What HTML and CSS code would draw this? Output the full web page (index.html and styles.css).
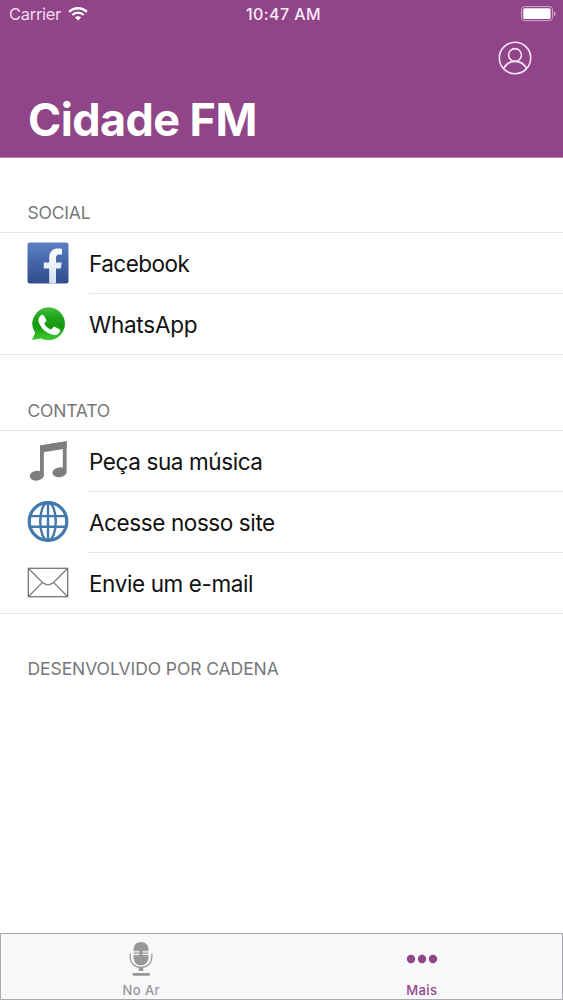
FILE: index.html
```html
<!DOCTYPE html>
<html lang="pt-BR">
<head>
    <meta charset="UTF-8">
    <meta name="viewport" content="width=device-width, initial-scale=1.0">
    <title>Cidade FM</title>
    <link rel="stylesheet" href="styles.css">
</head>
<body>
    <header class="header">
        <div class="status-bar">
            <div class="carrier">
                <span>Carrier</span>
                <svg class="wifi" width="20" height="14" viewBox="0 0 20 14" fill="none" stroke="#fff">
                    <path d="M1.2 4.9a12.4 12.4 0 0 1 17.6 0" stroke-width="2.4"/>
                    <path d="M4.3 8a8 8 0 0 1 11.4 0" stroke-width="2.2"/>
                    <path d="M10 13.6l-3.1-3.1a4.4 4.4 0 0 1 6.2 0z" fill="#fff" stroke="none"/>
                </svg>
            </div>
            <span class="time">10:47 AM</span>
            <svg class="battery" width="35" height="16" viewBox="0 0 35 16">
                <rect x="0.6" y="0.6" width="31" height="14" rx="3" fill="none" stroke="#d5acd0" stroke-width="1"/>
                <rect x="2.2" y="2.2" width="27.4" height="10.8" rx="1.5" fill="#fff"/>
                <path d="M33 5.3q1.7 1 1.7 2.5T33 10.3z" fill="#d5acd0"/>
            </svg>
        </div>
        <div class="nav">
            <svg width="34" height="34" viewBox="0 0 34 34" fill="none" stroke="#fbe3f8" stroke-width="1.6">
                <circle cx="17" cy="17" r="15.7"/>
                <circle cx="17" cy="14" r="6.4"/>
                <path d="M5.6 27.4C8 22.8 12 20.4 17 20.4s9 2.4 11.4 7"/>
            </svg>
        </div>
        <h1>Cidade FM</h1>
    </header>

    <main class="content">
        <h2 class="section-title">SOCIAL</h2>
        <ul class="list">
            <li class="row">
                <svg class="icon" width="42" height="42" viewBox="0 0 42 42">
                    <defs>
                        <linearGradient id="blue" x1="0" y1="0" x2="0" y2="1">
                            <stop offset="0" stop-color="#5b7fc6"/>
                            <stop offset="1" stop-color="#2f4b8b"/>
                        </linearGradient>
                        <linearGradient id="letter" x1="0" y1="0" x2="0" y2="1">
                            <stop offset="0" stop-color="#fff"/>
                            <stop offset="1" stop-color="#d3def2"/>
                        </linearGradient>
                    </defs>
                    <rect x="0.5" y="0.5" width="41" height="41" rx="2.5" fill="url(#blue)"/>
                    <path d="M22.2 41.5V26.6h-5.4v-6.2h5.4v-4.6c0-6 3.4-9.2 9.2-9.2 1.6 0 2.8.1 3.6.3v5.7h-2.7c-2.6 0-3.3 1.2-3.3 3.4v4.4h5.7l-.8 6.2H29v14.9z" fill="url(#letter)"/>
                </svg>
                <div class="label facebook">Facebook</div>
            </li>
            <li class="row">
                <svg class="icon" width="42" height="42" viewBox="0 0 42 42">
                    <defs>
                        <linearGradient id="green" x1="0" y1="0" x2="0" y2="1">
                            <stop offset="0" stop-color="#49bd3c"/>
                            <stop offset="0.3" stop-color="#20a51c"/>
                            <stop offset="0.6" stop-color="#129a12"/>
                            <stop offset="1" stop-color="#43cd31"/>
                        </linearGradient>
                    </defs>
                    <path d="M21.3 5.2a16.5 16.5 0 1 1-7.4 31.2L4.9 38l3.2-7.2A16.5 16.5 0 0 1 21.3 5.2z" fill="url(#green)"/>
                    <path d="M13.7 13.4c.8-.9 2.5-1 3.2.1l2.2 4.1c.5.9.1 1.7-.5 2.3l-1.5 1.6c1.6 2.8 3.9 4.9 6.8 6.2l2.1-2.3c.6-.6 1.2-.8 2-.4l4 2c1.3.7 1.3 1.8.8 2.9-1.2 2.5-4 3.5-6.8 2.9-7.1-1.7-12.1-6.4-14.2-12.5-.9-2.5-.2-5.2 1.9-6.9z" fill="#fff"/>
                </svg>
                <div class="label whatsapp">WhatsApp</div>
            </li>
        </ul>

        <h2 class="section-title contact">CONTATO</h2>
        <ul class="list">
            <li class="row">
                <svg class="icon" width="42" height="42" viewBox="0 0 42 42" fill="#7e7e7e">
                    <path fill-rule="evenodd" d="M13 5.4L39.6 1.2V32.5h-3.8V8.5L16.8 11.2V36H13z"/>
                    <path d="M13 5.4L39.6 1.2V8.5L13 12.7z"/>
                    <ellipse cx="9.8" cy="35.7" rx="7.1" ry="4.9" transform="rotate(-7 9.8 35.7)"/>
                    <ellipse cx="32.5" cy="32.3" rx="7.1" ry="4.9" transform="rotate(-7 32.5 32.3)"/>
                </svg>
                <div class="label">Peça sua música</div>
            </li>
            <li class="row">
                <svg class="icon" width="42" height="42" viewBox="0 0 42 42" fill="none" stroke="#4078ae" stroke-width="2.4">
                    <circle cx="21" cy="20.5" r="18.8" stroke-width="3.2"/>
                    <ellipse cx="21" cy="20.5" rx="7.8" ry="19"/>
                    <path d="M21 1.5v38M4 15.1h34M4 25.8h34"/>
                </svg>
                <div class="label">Acesse nosso site</div>
            </li>
            <li class="row">
                <svg class="icon" width="42" height="42" viewBox="0 0 42 42" fill="none" stroke="#777" stroke-width="1.3">
                    <rect x="1.3" y="7.3" width="39.4" height="28.4"/>
                    <path d="M1.5 7.5l14 14q5.5 4.6 11 0L40.5 7.5M1.5 35.5l14-14.1M40.5 35.5l-14-14.1"/>
                </svg>
                <div class="label">Envie um e-mail</div>
            </li>
        </ul>

        <p class="section-title credit">DESENVOLVIDO POR CADENA</p>
    </main>

    <nav class="tab-bar">
        <div class="tab">
            <svg width="24" height="36" viewBox="0 0 24 36" fill="#97979a">
                <path d="M4.5 9.2C4.5 4 7.5 1 12 1s7.5 3 7.5 8.2z"/>
                <path d="M4.5 15.7h15c0 5.3-2.8 8.6-7.5 8.6s-7.5-3.3-7.5-8.6z"/>
                <path d="M4.5 9.2h6v1h-6zM4.5 11.4h6v1.3h-6zM4.5 13.9h6v1.9h-6zM13.5 9.2h6v1h-6zM13.5 11.4h6v1.3h-6zM13.5 13.9h6v1.9h-6zM10.5 9h3v7h-3z"/>
                <path d="M1.2 12.5V16c0 6.2 4.3 10.4 10.8 10.4S22.8 22.2 22.8 16v-3.5" fill="none" stroke="#97979a" stroke-width="1.2"/>
                <path d="M9.8 26h4.4v4H9.8z"/>
                <rect x="3.5" y="32" width="17.3" height="2.7" rx="1"/>
            </svg>
            <span>No Ar</span>
        </div>
        <div class="tab active">
            <svg width="32" height="36" viewBox="0 0 32 36" fill="#8f4688">
                <circle cx="5" cy="18" r="4.2"/>
                <circle cx="16" cy="18" r="4.2"/>
                <circle cx="27" cy="18" r="4.2"/>
            </svg>
            <span>Mais</span>
        </div>
    </nav>
</body>
</html>
```

FILE: styles.css
```css
* {
    box-sizing: border-box;
}
body {
    display: flex;
    flex-direction: column;
    height: 1000px;
    margin: 0;
    background-color: #fff;
    font-family: Inter, "Liberation Sans", sans-serif;
    color: #111;
}
svg {
    display: block;
    flex-shrink: 0;
}
.header {
    height: 158px;
    background-color: #8f4587;
    border-bottom: 1px solid #b88ab3;
    color: #fff;
}
.status-bar {
    display: grid;
    grid-template-columns: 1fr auto 1fr;
    align-items: center;
    height: 28px;
    padding: 0 7px 0 9px;
    font-size: 16.5px;
}
.carrier {
    display: flex;
    align-items: center;
    gap: 7px;
    letter-spacing: -0.3px;
    color: #f3d9f0;
}
.time {
    padding-left: 2px;
    font-weight: 500;
    font-size: 16px;
    letter-spacing: 0.4px;
    color: #fceafa;
}
.battery {
    justify-self: end;
}
.nav {
    display: flex;
    justify-content: flex-end;
    padding: 13px 31px 0 0;
}
h1 {
    margin: 17px 0 0 28px;
    font-size: 45px;
    line-height: 56px;
    font-weight: 650;
    letter-spacing: -0.6px;
}
.content {
    flex: 1;
}
.section-title {
    margin: 0;
    padding: 45px 27.5px 0;
    height: 74px;
    font-size: 17.5px;
    line-height: 20px;
    font-weight: 400;
    letter-spacing: -0.2px;
    color: #77777a;
}
.contact {
    height: 75px;
    padding-top: 46px;
}
.credit {
    letter-spacing: -0.08px;
}
.list {
    margin: 0;
    padding: 0;
    list-style: none;
    border-top: 1px solid #e6e6e8;
    border-bottom: 1px solid #e6e6e8;
}
.row {
    display: flex;
    align-items: center;
    height: 61px;
    padding-left: 27px;
}
.row:last-child {
    height: 60px;
}
.icon {
    margin: 0 20px 2px 0;
}
.label {
    flex: 1;
    height: 100%;
    border-bottom: 1px solid #e6e6e8;
    font-size: 22.5px;
    line-height: 62px;
    letter-spacing: -0.4px;
}
.facebook {
    letter-spacing: -0.52px;
}
.whatsapp {
    letter-spacing: -0.25px;
}
.row:last-child .label {
    border-bottom: none;
}
.tab-bar {
    display: flex;
    height: 67px;
    background-color: #f8f7fa;
    border: 1px solid #aaa9ad;
}
.tab {
    display: flex;
    flex: 1;
    flex-direction: column;
    align-items: center;
    padding-top: 7px;
    font-size: 13px;
    font-weight: 500;
    letter-spacing: 0.4px;
    color: #97979a;
}
.tab span {
    margin-top: 4px;
    line-height: 18px;
}
.active {
    color: #8f4688;
}
```
